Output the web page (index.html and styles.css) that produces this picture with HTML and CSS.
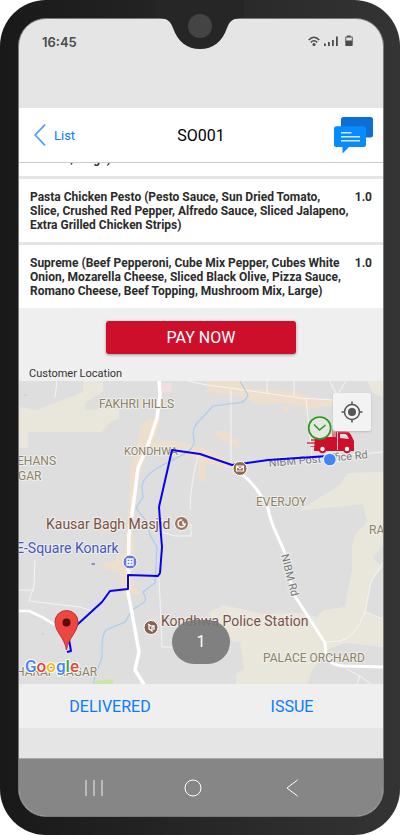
FILE: index.html
```html
<!DOCTYPE html>
<html lang="en">
<head>
<meta charset="utf-8">
<meta name="viewport" content="width=device-width, initial-scale=1">
<title>SO001</title>
<link rel="stylesheet" href="styles.css">
</head>
<body>
<div class="phone">
  <svg class="notch" viewBox="0 0 88 50" aria-hidden="true">
    <path d="M0 0H88V18H87C78 18 74 20 71 28C66 42 57 49 44 49S22 42 17 28C14 20 10 18 1 18H0Z" fill="#262626"/>
    <circle cx="44" cy="26" r="12" fill="#444"/>
  </svg>
  <div class="screen">
    <div class="status">
      <span>16:45</span>
      <svg width="46" height="12" viewBox="0 0 46 12" aria-hidden="true">
        <g fill="none" stroke="#4b4b4b" stroke-width="1.5">
          <path d="M.7 5C4 1.2 8 1.2 11.3 5M2.8 7.4C5 5.2 7 5.2 9.2 7.4"/>
        </g>
        <g fill="#4b4b4b">
          <circle cx="6" cy="9.6" r="1.5"/>
          <path d="M16 8.500h1.800v2.500H16zM20 7h1.800v4H20zM24 5h1.800v6H24zM28 1.500h1.800V11H28z"/>
          <path d="M39 .5h3.500V1.500H44q.7 0 .7.7v8.100q0 .7-.7.7h-6q-.7 0-.7-.7V2.200q0-.7.7-.7h1zM38.200 2.500v3h5.600v-3z" fill-rule="evenodd"/>
        </g>
      </svg>
    </div>

    <main class="app">
      <header class="bar">
        <a class="back" href="#list">
          <svg width="12" height="22" viewBox="0 0 12 22" aria-hidden="true"><path d="M11 .7 1.200 11 11 21.300" fill="none" stroke="#559fff" stroke-width="1.800"/></svg>
          List
        </a>
        <h1>SO001</h1>
        <button class="chat" type="button" aria-label="Messages">
          <svg width="39" height="37" viewBox="0 0 39 37" aria-hidden="true">
            <rect x="7" y="0" width="32" height="20.500" rx="2.500" fill="#0d6fd4"/>
            <path d="M2.500 9.200H29.500Q32 9.200 32 11.700V27.500Q32 30 29.500 30H15L8.500 36.500V30H2.500Q0 30 0 27.500V11.700Q0 9.200 2.500 9.200Z" fill="#078bff"/>
            <path d="M7 15.700H17.500M7 19.700H26M7 23.700H26" stroke="#d6ebff" stroke-width="1.400"/>
          </svg>
        </button>
      </header>

      <ul class="items">
        <li class="item clipped"><span class="name">Cheese, Large)</span></li>
        <li class="item"><span class="name">Pasta Chicken Pesto (Pesto Sauce, Sun Dried Tomato,<br>Slice, Crushed Red Pepper, Alfredo Sauce, Sliced Jalapeno,<br>Extra Grilled Chicken Strips)</span><span class="qty">1.0</span></li>
        <li class="item"><span class="name">Supreme (Beef Pepperoni, Cube Mix Pepper, Cubes White<br>Onion, Mozarella Cheese, Sliced Black Olive, Pizza Sauce,<br>Romano Cheese, Beef Topping, Mushroom Mix, Large)</span><span class="qty">1.0</span></li>
      </ul>

      <button class="pay" type="button">PAY NOW</button>
      <h2>Customer Location</h2>

      <section class="map" aria-label="Customer Location">
        <svg class="tiles" viewBox="19 381 364 303" preserveAspectRatio="xMidYMid slice">
          <rect x="0" y="370" width="400" height="330" fill="#dedede"/>
          <g fill="#e9e7dc">
            <path d="M19 407 37 410 83 392V381H103V392L86 402 85 410 119 408V418L110 422 102 432H28V448H19Z"/>
            <path d="M383 472 347 473 340 485 298 511 363 504 367 522 355 535 352 547V570L345 607 324 610 316 617 300 613 262 614 223 605 208 613 228 634 233 642H240L244 669 236 674V684H307L313 669 327 650 345 643 383 647V620L365 612 371 582 383 567 373 558 383 545Z"/>
            <path d="M367 381H383V397L373 393Z"/>
          </g>
          <path d="M93 684 96 681 113 679V684Z" fill="#cde6a5"/>
          <g fill="#eddfcb">
            <path d="M141 424 149 419H161L157 433 151 446 144 460 139 474 133 530 135 555 132 563 133 583 141 594 122 595 120 573 104 568V562H114L118 556 125 553 129 500 130 468 136 450Z"/>
            <path d="M136 441H175L202 448 232 462 231 469 206 463V481H199V459L170 453 138 449Z"/>
            <path d="M207 381H244L250 389 298 392 311 398 350 400V404L310 408 283 403 258 404 240 396 207 392Z"/>
            <path d="M216 431H228L231 438 239 440V448L215 436ZM283 407H288V412H283Z"/>
          </g>
          <path d="M162 383H172L171 392H161Z" fill="#f2dde1"/>
          <g fill="none" stroke="#f4f4f4" stroke-width="1">
            <path d="M57 381 55 397M172 375Q190 384 230 388L300 398 366 402M231 389V463M267 381V394M294 381V396M306 399 312 457M328 378 337 395 346 381M199 453Q190 485 190 510M35 560 34 586 29 601 80 607 92 611M34 590H19M159 577 162 647H231M312 458 383 452M383 562 371 582 365 612 383 619M365 612Q355 638 340 641L326 642M347 669 360 676 357 684M360 676 371 684M162 532 175 536H191V524"/>
          </g>
          <path d="M240 381 248 395Q245 403 237 403L213 406 200 420Q191 428 194 438 196 446 186 453L167 463Q143 474 142 487L143 497 136 508 147 522 150 535 157 547 155 583 143 592Q148 600 143 603L132 610 125 622 106 630Q101 636 102 657L93 683M24 395H27M42 634H44" fill="none" stroke="#a8cdf2" stroke-width="1.200"/>
          <g fill="none" stroke="#fff" stroke-linejoin="round">
            <path d="M159 380 160 395 157 418 148 445 138 468 135 492 129 535 128 593 132 613 139 652 135 670 145 686" stroke-width="3.500"/>
            <path d="M240 473Q256 484 268 508 270 520 277 535L285 553 293 593 325 643 326 655Q328 665 344 666L385 667" stroke-width="3"/>
            <path d="M19 611H29L42 617 60 628" stroke-width="2.500"/>
          </g>

          <g class="area">
            <text x="99" y="408">FAKHRI HILLS</text>
            <text class="small" x="124" y="455">KONDHWA</text>
            <text x="17" y="465">EHANS</text>
            <text x="18" y="480">GAR</text>
            <text x="256" y="506">EVERJOY</text>
            <text x="369" y="534">RA</text>
            <text x="263" y="662">PALACE ORCHARD</text>
            <text x="16" y="676">HARAF NAGAR</text>
          </g>
          <g class="poi">
            <text x="46" y="529">Kausar Bagh Masjid</text>
            <text x="161" y="626">Kondhwa Police Station</text>
          </g>
          <text class="mall" x="16" y="553">E-Square Konark</text>
          <g class="road">
            <text transform="translate(269 467) rotate(-5)">NIBM Post Office Rd</text>
            <text transform="translate(281 555) rotate(76)">NIBM Rd</text>
          </g>

          <path d="M328 456 268 460 247 463 232 465 200 454 172 450 159 507 161 535 162 547 160 573 158 576 128 575V589L110 591 102 602 78 624 68 634 71 651 67 652" fill="none" stroke="#0800f4" stroke-width="2" stroke-linejoin="round"/>

          <g stroke="#fff">
            <circle cx="181.500" cy="523.500" r="7" fill="#9d7360"/>
            <circle cx="240" cy="468.500" r="7" fill="#94694f"/>
            <circle cx="151" cy="627.500" r="7" fill="#87604f"/>
            <circle cx="130" cy="562" r="7" fill="#6679d6"/>
          </g>
          <g fill="none" stroke="#fff">
            <path d="M182 520A3.500 3.500 0 1 0 185 524M183 521V524H186" stroke-width="1.400"/>
            <path d="M236.500 466H243.500V471H236.500ZM236.500 466 240 469 243.500 466" stroke-width="1.200"/>
            <path d="M149 625V629L152 631V626H154V630M148 624 151 626" stroke-width="1.300"/>
            <path d="M127 559H133V565H127ZM130 559V565M127 562H133" stroke-width="1.300"/>
          </g>
          <path d="M91.500 564H95" stroke="#6679d6" stroke-width="1.500"/>

          <g fill="#ce0f2c">
            <path d="M315 437H336V431H345Q350 431 352 437L354 441V451H314Z"/>
            <path d="M307 442H316V444H307ZM311 439H318V441H311ZM310 446H318V447H310Z" opacity=".6"/>
            <path d="M332 429H338V437H332Z" opacity=".45"/>
          </g>
          <path d="M340 434H345Q347 434 349 439L340 438Z" fill="#e9d8dc"/>
          <path d="M337.500 432V450" stroke="#f3c5cc" stroke-width="1"/>
          <g fill="#fff" stroke="#ce0f2c" stroke-width="2"><circle cx="322.500" cy="449" r="3.200"/><circle cx="347" cy="449" r="3.200"/></g>
          <circle cx="319.700" cy="428" r="11" fill="#e3e8e1" stroke="#2f961f" stroke-width="1.700"/>
          <path d="M314 424.500 319.500 430 325.500 425" fill="none" stroke="#2f961f" stroke-width="1.500"/>
          <circle cx="329.800" cy="459.500" r="6.500" fill="#4285f4" stroke="#e7f0fd" stroke-width="1.300"/>

          <path d="M66.500 650C65 638 55 632 55 622A11.500 11.500 0 0 1 78 622C78 632 68 638 66.500 650Z" fill="#ed4641" stroke="#b83330"/>
          <circle cx="66.500" cy="622.500" r="4" fill="#560d0c"/>
          <text class="google" x="25" y="672"><tspan fill="#4285f4">G</tspan><tspan fill="#ea4335">o</tspan><tspan fill="#fbbc05">o</tspan><tspan fill="#4285f4">g</tspan><tspan fill="#34a853">l</tspan><tspan fill="#ea4335">e</tspan></text>
        </svg>
        <button class="locate" type="button" aria-label="My location">
          <svg width="22" height="22" viewBox="0 0 22 22" aria-hidden="true">
            <circle cx="11" cy="11" r="4" fill="#555"/>
            <circle cx="11" cy="11" r="7.500" fill="none" stroke="#555" stroke-width="1.500"/>
            <path d="M11 .5V4M11 18V21.500M.5 11H4M18 11H21.500" stroke="#555" stroke-width="1.600"/>
          </svg>
        </button>
        <span class="count">1</span>
      </section>

      <div class="actions">
        <button type="button">DELIVERED</button>
        <button type="button">ISSUE</button>
      </div>
    </main>

    <nav class="system">
      <button type="button" aria-label="Recent apps"><svg width="18" height="18" viewBox="0 0 18 18"><path d="M1 1V17M9 1V17M17 1V17" stroke="#eee"/></svg></button>
      <button type="button" aria-label="Home"><svg width="18" height="18" viewBox="0 0 18 18"><circle cx="9" cy="9" r="8" fill="none" stroke="#fff"/></svg></button>
      <button type="button" aria-label="Back"><svg width="18" height="18" viewBox="0 0 18 18"><path d="M14.500 1 4 9 14.500 17" fill="none" stroke="#fff"/></svg></button>
    </nav>
  </div>
</div>
</body>
</html>
```
FILE: styles.css
```css
* {
  box-sizing: border-box;
}

body {
  margin: 0;
  background: #fff;
  font-family: Roboto, "Liberation Sans", sans-serif;
}

button {
  padding: 0;
  border: 0;
  background: none;
  font-family: inherit;
}

svg {
  display: block;
}

.phone {
  position: relative;
  min-height: 100vh;
  padding: 18px 16px 18px 18px;
  display: flex;
  border-radius: 46px;
  background: linear-gradient(90deg, #191919, #343434);
}

.notch {
  position: absolute;
  top: 0;
  left: 50%;
  width: 88px;
  margin-left: -44px;
}

.screen {
  flex: 1;
  min-width: 0;
  display: flex;
  flex-direction: column;
  overflow: hidden;
  border: 1px solid #777;
  border-radius: 28px;
  background: #e5e5e5;
}

.status {
  height: 89px;
  padding: 16px 29px 0 23px;
  display: flex;
  justify-content: space-between;
  font: 600 13px/14px Inter, sans-serif;
  color: #4b4b4b;
}

.app {
  background: #efefef;
}

.bar {
  height: 55px;
  padding: 0 10px;
  display: grid;
  grid-template-columns: 1fr auto 1fr;
  align-items: center;
  border-bottom: 1px solid #ccc;
  background: #fff;
}

.back {
  padding-left: 5px;
  display: flex;
  align-items: center;
  gap: 8px;
  font-size: 13px;
  color: #0a7aff;
  text-decoration: none;
}

.bar h1 {
  margin: 0;
  font-size: 16px;
  font-weight: 400;
  color: #000;
}

.chat {
  justify-self: end;
}

.items {
  margin: 0;
  padding: 0;
  display: grid;
  gap: 3px;
  list-style: none;
  background: #e5e5e5;
}

.item {
  min-height: 63px;
  padding: 11px 11px 10px;
  display: flex;
  justify-content: space-between;
  background: #fff;
  font-size: 12px;
  font-weight: 700;
  line-height: 14px;
  color: #2b2b2b;
  white-space: nowrap;
}

.name {
  flex: 1;
  width: 0;
}

.clipped {
  min-height: 0;
  height: 13px;
  padding: 0 11px 10px;
  align-items: flex-end;
  overflow: hidden;
}

.pay {
  display: block;
  width: 52%;
  height: 33px;
  margin: 13px auto;
  border-radius: 3px;
  background: #ce0f2c;
  box-shadow: 0 1px 3px #999;
  font-size: 16px;
  color: #fff;
}

.app h2 {
  margin: 0;
  padding: 0 10px;
  font-size: 11px;
  font-weight: 400;
  line-height: 14px;
  color: #333;
}

.map {
  position: relative;
  overflow: hidden;
}

.tiles {
  width: 100%;
}

.tiles text {
  paint-order: stroke;
  stroke: #eee;
  stroke-width: 2px;
  stroke-linejoin: round;
}

.area {
  font-size: 12px;
  fill: #8f8260;
}

.area .small {
  font-size: 11px;
}

.poi {
  font-size: 14px;
  fill: #7b513d;
}

.mall {
  font-size: 14px;
  fill: #4457bd;
}

.road {
  font-size: 11px;
  fill: #777;
}

.tiles .google {
  font-size: 17px;
  font-weight: 500;
  stroke: #fff;
}

.locate {
  position: absolute;
  top: 12px;
  right: 12px;
  width: 38px;
  height: 38px;
  display: grid;
  place-items: center;
  border-radius: 2px;
  background: #f3f3f3;
  box-shadow: 0 1px 2px #bbb;
}

.count {
  position: absolute;
  bottom: 20px;
  left: 50%;
  width: 58px;
  margin-left: -29px;
  border-radius: 22px;
  background: #777777e8;
  font-size: 16px;
  line-height: 44px;
  text-align: center;
  color: #fff;
}

.actions {
  display: grid;
  grid-template-columns: 1fr 1fr;
  height: 44px;
}

.actions button {
  font-size: 16px;
  color: #0a7aff;
}

.system {
  height: 58px;
  margin-top: auto;
  padding: 0 41px 0 25px;
  display: grid;
  grid-template-columns: 1fr 1fr 1fr;
  border-top: 1px solid #aaa;
  background: #868686;
}

.system button {
  display: grid;
  place-items: center;
}
```
